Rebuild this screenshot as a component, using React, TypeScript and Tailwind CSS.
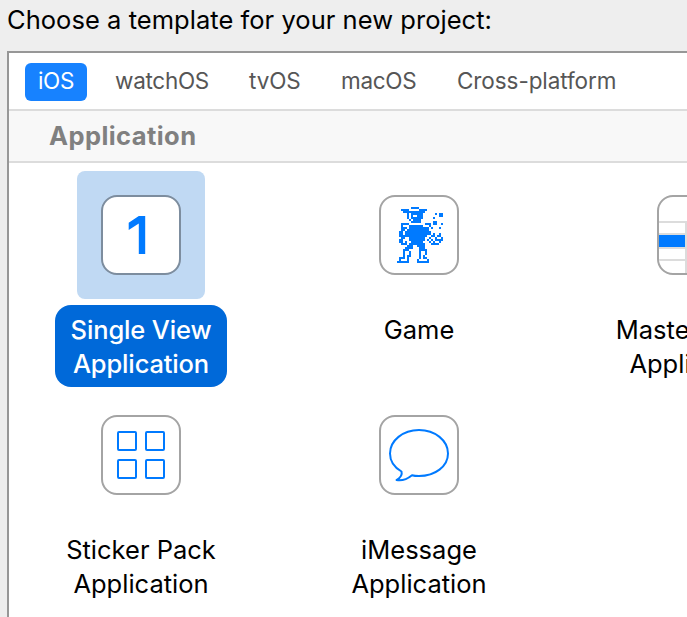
import type { ReactNode } from "react";

const ROBOT = [
  ".......####............",
  "..####.....####........",
  "...###########.........",
  ".....#.######......#.##",
  ".....#.#..###........##",
  ".....#.######.....#....",
  "......#.####...........",
  ".......#####......##...",
  "..####........###.##..#",
  "..#...#######...#......",
  "..###.##########.#...#.",
  "..##.###########.......",
  ".##.#############......",
  ".##.#############.#..#.",
  ".##############..##.##.",
  "..##..########..#..#..#",
  ".##...########.#.#.####",
  ".##.#..######...#.#..#.",
  "..###.########...####..",
  ".....###..####.........",
  "....####...###.........",
  "...###.....####........",
  "...#..#....#..#........",
  "...#..#....#..#........",
  "...#.##....#.#.........",
  ".###.#.....#.##........",
  ".#...#....#....#.......",
  "######....######.......",
];

function Robot() {
  return (
    <svg className="size-full" viewBox="0 0 76 76" fill="#007aff" shapeRendering="crispEdges">
      {ROBOT.flatMap((row, y) =>
        [...row].map((c, x) =>
          c === "#" ? <rect key={`${x}-${y}`} x={16 + x * 2} y={10 + y * 2} width="2" height="2" /> : null,
        ),
      )}
    </svg>
  );
}

function MasterDetail() {
  return (
    <svg className="size-full" viewBox="0 0 76 76" shapeRendering="crispEdges">
      <path d="M0 25h27M0 37h27M0 51h27M0 63h27M27 24v52" stroke="#dcdcdc" strokeWidth="2" fill="none" />
      <path d="M0 38h26v12H0z" fill="#007aff" />
    </svg>
  );
}

function Stickers() {
  return (
    <div className="grid grid-cols-2 gap-2">
      {[0, 1, 2, 3].map((n) => (
        <div key={n} className="size-5 rounded-[2px] border-2 border-[#007aff]" />
      ))}
    </div>
  );
}

function Bubble() {
  return (
    <svg className="size-full" viewBox="0 0 76 76" fill="none" stroke="#007aff" strokeWidth="2" strokeLinejoin="round">
      <path d="M20.500 54.500C13.500 50.500 9 44 9 36.500C9 23.500 22 13 38 13C54 13 67 23.500 67 36.500C67 49.500 54 59 38 59C35.500 59 33 58.800 31 58.200C27 61.500 21 64 15.500 63C19 61 21.500 58 20.500 54.500Z" />
    </svg>
  );
}

function Template({ lines, selected = false, children }: { lines: string[]; selected?: boolean; children: ReactNode }) {
  return (
    <div className="flex h-[220px] w-[172px] shrink-0 flex-col items-center">
      <div className={`flex size-32 shrink-0 items-center justify-center rounded-lg ${selected ? "bg-[#c0d9f3]" : ""}`}>
        <div className={`flex size-20 items-center justify-center overflow-hidden rounded-2xl border-2 bg-white ${selected ? "border-[#7d8d9e]" : "border-[#a4a4a4]"}`}>
          {children}
        </div>
      </div>
      <div className={`mt-1.5 flex h-[82px] w-[172px] shrink-0 flex-col items-center rounded-2xl pt-2 text-[25.5px] leading-[34px] whitespace-nowrap ${selected ? "bg-[#0069d9] font-medium tracking-[-0.15px] text-white" : "text-black"}`}>
        {lines.map((line) => (
          <div key={line}>{line}</div>
        ))}
      </div>
    </div>
  );
}

export default function App() {
  return (
    <main className="flex h-[617px] w-[687px] flex-col overflow-hidden bg-[#eeeeee] pl-[7px] font-['Inter','Liberation_Sans',sans-serif]">
      <h1 className="h-[51px] shrink-0 pt-1 text-[25.5px] leading-8 tracking-[0.04px] whitespace-nowrap text-black">
        Choose a template for your new project:
      </h1>
      <section className="flex min-h-0 flex-1 flex-col overflow-hidden border-t-2 border-l-2 border-[#979797] bg-white">
        <nav className="flex h-[58px] shrink-0 items-center gap-7 border-b-2 border-[#dcdcdc] pl-4 text-[22.5px] tracking-[-0.28px] text-[#565656]">
          <div className="mt-0.5 flex h-[38px] w-[62px] items-center justify-center rounded-md bg-[#1782ff] pb-0.5 text-white">iOS</div>
          <div className="w-[94px]">watchOS</div>
          <div className="ml-3 w-[52px] tracking-[-0.1px]">tvOS</div>
          <div className="ml-3 w-[76px]">macOS</div>
          <div className="ml-3 tracking-[-0.08px] whitespace-nowrap">Cross-platform</div>
        </nav>
        <h2 className="h-[52px] shrink-0 border-b-2 border-[#dcdcdc] bg-[#f8f8f8] pl-10 text-[25.5px] leading-[50px] font-bold tracking-[0.42px] text-[#808080]">
          Application
        </h2>
        <div className="flex shrink-0 gap-[106px] pt-2 pl-[46px]">
          <Template lines={["Single View", "Application"]} selected>
            <svg className="size-full" viewBox="0 0 76 76">
              <path d="M42.200 19V57H35.800V26.500L25.700 33V25.700L35.800 19Z" fill="#007aff" />
            </svg>
          </Template>
          <Template lines={["Game"]}><Robot /></Template>
          <Template lines={["Master-Detail", "Application"]}><MasterDetail /></Template>
        </div>
        <div className="flex shrink-0 gap-[106px] pl-[46px]">
          <Template lines={["Sticker Pack", "Application"]}><Stickers /></Template>
          <Template lines={["iMessage", "Application"]}><Bubble /></Template>
        </div>
      </section>
    </main>
  );
}
